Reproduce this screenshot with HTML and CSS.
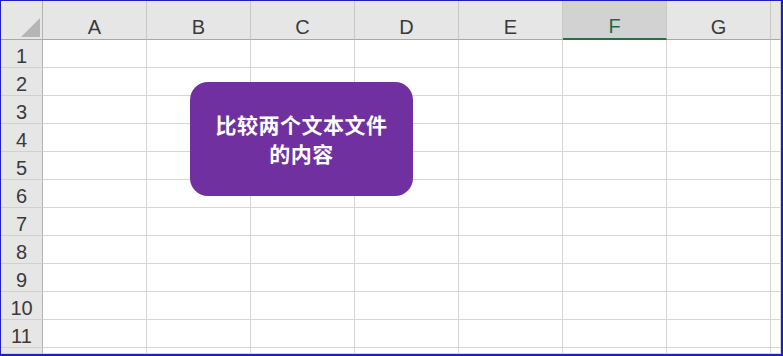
FILE: index.html
```html
<!DOCTYPE html>
<html lang="zh-CN">
<head>
    <meta charset="UTF-8">
    <meta name="viewport" content="width=device-width, initial-scale=1.0">
    <title>比较两个文本文件的内容</title>
    <link rel="stylesheet" href="styles.css">
</head>
<body>
    <main class="sheet">
        <div class="grid" id="grid"></div>
        <div class="shape">比较两个文本文件<br>的内容</div>
    </main>

    <script>
        const grid = document.getElementById('grid')
        const cols = ['A', 'B', 'C', 'D', 'E', 'F', 'G', '']

        const cell = (cls, text) => {
            const el = document.createElement('div')
            el.className = cls
            el.textContent = text || ''
            grid.appendChild(el)
        }

        // header row
        const corner = document.createElement('div')
        corner.className = 'corner'
        corner.innerHTML = '<span class="tri"></span>'
        grid.appendChild(corner)
        cols.forEach(c => cell(c === 'F' ? 'col-head active' : 'col-head', c))

        // rows 1..11 plus a cut-off row at the bottom
        for (let r = 1; r <= 12; r++) {
            cell('row-head', r < 12 ? r : '')
            cols.forEach(() => cell('cell'))
        }
    </script>
</body>
</html>
```

FILE: styles.css
```css
*{
    box-sizing: border-box;
}
body{
    margin: 0;
    background: #fff;
    font-family: "Liberation Sans", Arial, sans-serif;
}
.sheet{
    position: relative;
    width: 783px;
    height: 356px;
    border: 1px solid #1f1fc0;
    border-right-width: 2px;
    border-bottom-width: 2px;
    overflow: hidden;
}
.grid{
    display: grid;
    grid-template-columns: 42px repeat(7, 104px) 1fr;
    grid-template-rows: 39px repeat(11, 28px) 1fr;
    height: 100%;
}
.corner,.col-head,.row-head{
    background: #e6e6e6;
    color: #3a3a3a;
    font-size: 20px;
}
.corner{
    display: flex;
    justify-content: flex-end;
    align-items: flex-end;
    padding: 0 2px 2px 0;
    border-right: 1px solid #b4b4b4;
    border-bottom: 1px solid #a8a8a8;
}
.tri{
    width: 19px;
    height: 19px;
    background: #b5b5b5;
    clip-path: polygon(100% 0, 100% 100%, 0 100%);
}
.col-head{
    display: flex;
    justify-content: center;
    align-items: flex-end;
    padding-bottom: 0;
    border-right: 1px solid #c8c8c8;
    border-bottom: 1px solid #a8a8a8;
}
.col-head.active{
    background: #d2d2d2;
    color: #1e6b41;
    border-bottom: 2px solid #217346;
    padding-bottom: 0;
}
.row-head{
    display: flex;
    justify-content: center;
    align-items: center;
    padding-top: 5px;
    border-right: 1px solid #b4b4b4;
    border-bottom: 1px solid #d0d0d0;
    overflow: hidden;
}
.cell{
    border-right: 1px solid #d6d6d6;
    border-bottom: 1px solid #d6d6d6;
}

/* SHAPE */
.shape{
    position: absolute;
    left: 189px;
    top: 81px;
    width: 223px;
    height: 114px;
    border-radius: 18px;
    background: #7030a0;
    color: #fff;
    display: flex;
    align-items: center;
    justify-content: center;
    text-align: center;
    font-family: "Noto Sans CJK SC", "Microsoft YaHei", sans-serif;
    font-weight: bold;
    font-size: 21px;
    line-height: 29px;
    letter-spacing: 0.5px;
}
```
